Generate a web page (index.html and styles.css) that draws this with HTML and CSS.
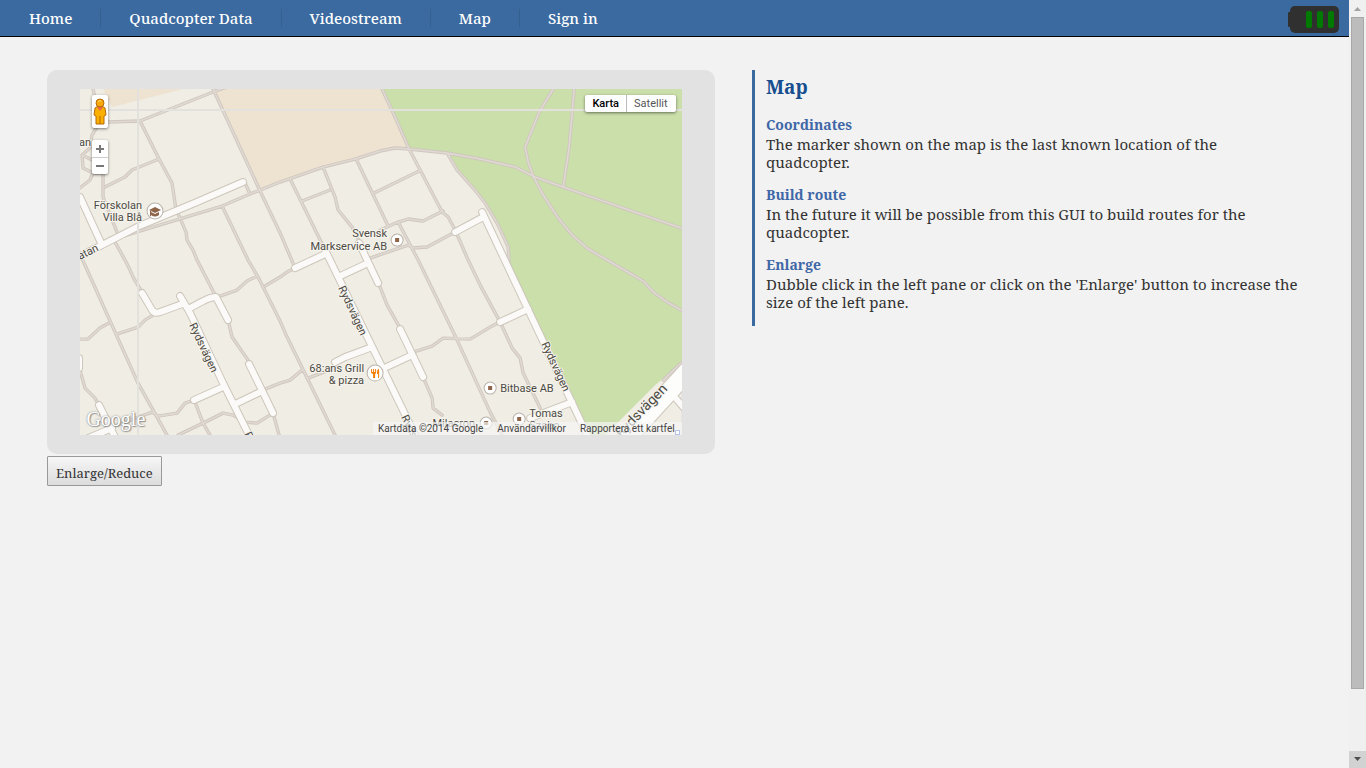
FILE: index.html
```html
<!DOCTYPE html>
<html lang="en">
<head>
<meta charset="utf-8">
<title>Map</title>
<link rel="stylesheet" href="styles.css">
</head>
<body>
<div class="page">
  <header class="topbar">
    <nav class="nav">
      <a class="nav-link" href="#home">Home</a>
      <a class="nav-link" href="#data">Quadcopter Data</a>
      <a class="nav-link" href="#video">Videostream</a>
      <a class="nav-link" href="#map">Map</a>
      <a class="nav-link" href="#signin">Sign in</a>
    </nav>
    <svg class="battery" width="52" height="28" viewBox="0 0 52 28" role="img" aria-label="Battery">
      <rect x="0" y="6" width="6" height="15" rx="1" fill="#303030"/>
      <rect x="2" y="0" width="49" height="27" rx="5" fill="#303030"/>
      <rect x="18" y="5" width="6" height="17" rx="2" fill="#007a00"/>
      <rect x="29" y="5" width="6" height="17" rx="2" fill="#007a00"/>
      <rect x="40" y="5" width="6" height="17" rx="2" fill="#007a00"/>
    </svg>
  </header>
  <main class="content">
    <section class="left">
      <div class="pane">
        <div class="map">
          <svg class="map-drawing" viewBox="80 89 601 346" role="img" aria-label="Street map">
            <rect x="80" y="89" width="601" height="346" fill="#f0ede4"/>
            <path fill="#eee2d0" d="M103 89H183L112 107ZM214 89H380L409 149L395 148L380 151L355 159L323 167L260 191Z"/>
            <path fill="#cadfaa" d="M380 89H682V363L655 385L605 435H587L509 264L508 247L497 223L485 203L473 188L457 170L447 153L409 149Z"/>
            <defs>
              <path id="paths" d="M213 89L260 191L281 235L295 268M108 122L140 121L213 92L227 87M140 121L159 159L172 183L176 210L180 218L186 232L187 240L193 250L197 260L215 295M105 187L125 177L132 170L159 159M93 89L97 108L98 125L92 135L90 148L82 155L83 168L93 173H103L103 197L117 232M93 173L90 180L80 188M82 155L92 160M120 237L222 206L250 194L280 182L323 167L355 159L380 151L395 148L409 149L447 153L480 159L515 167L535 177L563 187L620 207L681 228M245 183L250 194M222 206L248 260L258 277L280 321L287 337L335 435M115 242L125 260L130 270L133 277L142 292M80 254L138 383L167 435M80 339H88L100 328L109 323M117 334L138 327L145 320L153 315M220 296L237 290L247 281L257 276M265 286L280 277L287 272L295 268M228 320L232 337L250 363M265 389L280 383L290 380L302 370M308 378L337 367M80 370L85 388L95 398L99 405M117 425L152 412L158 416L177 413L185 403L194 400M195 402L203 423L210 435M178 435L203 423L223 413L233 415L245 422L257 423L273 413L279 435M290 179L325 250M302 201L330 190M323 167L335 197L338 210L352 227L360 243M356 159L388 226M374 193L419 171M382 89L394 115L409 149L442 212L448 217L455 230L468 260L480 285L500 322L512 348L520 358L523 373L540 408M380 230L398 222L408 219L423 221L443 211M398 222L418 260L457 340L490 412L502 435M370 258L408 245L413 248L427 247L455 232M380 287L387 305L400 328M413 352L432 346L443 338L470 339L490 327L500 322M423 377L432 398L433 408L442 415M553 89L539 112L525 147L528 162L533 176L543 195L558 218L572 235L588 249L607 260L643 281L653 292L667 302L681 310M574 89L569 147L563 187M447 153L457 170L473 188L485 203L497 223L508 247L509 264M682 362L663 380"/>
              <path id="streets" d="M243 182L197 202L137 227L102 245L80 256M80 197L102 245M142 293L152 310Q155 314 160 312L182 304M180 296L190 313L223 383L250 437M188 309L203 301Q211 297 216 297L228 320M194 400L223 387M235 404L262 391M249 364L273 413M99 405L115 437M88 438L112 428M79 358V368M295 268L325 254M325 250L380 363L416 437M338 277L368 263M359 243L378 283M335 362L345 357L372 347M384 368L412 355M400 329L423 377M455 232L483 217M482 212L588 437M500 322L528 309M530 418L572 402M672 394L684 408"/>
              <path id="avenue" d="M692 366L622 443"/>
            </defs>
            <g fill="none" stroke-linecap="round" stroke-linejoin="round">
              <use href="#paths" stroke="#cfc7be" stroke-width="3.4"/>
              <use href="#paths" stroke="#e0d9d3" stroke-width="1.6"/>
              <use href="#streets" stroke="#cdc6bb" stroke-width="8"/>
              <use href="#avenue" stroke="#cdc6bb" stroke-width="20"/>
              <use href="#streets" stroke="#fbfaf8" stroke-width="6"/>
              <use href="#avenue" stroke="#fdfdfc" stroke-width="18"/>
            </g>
            <path d="M80 110H682M138 89V435" stroke="#e2e1de" stroke-width="2" fill="none"/>
            <g class="road-names">
              <text x="80" y="260" transform="rotate(-27 80 260)">atan</text>
              <text x="79" y="146">an</text>
              <text transform="translate(189 325) rotate(65)">Rydsvägen</text>
              <text transform="translate(338 288) rotate(65)">Rydsvägen</text>
              <text transform="translate(541 344) rotate(65)">Rydsvägen</text>
              <text transform="translate(401 417) rotate(65)">Rydsvägen</text>
              <text transform="translate(244 434) rotate(65)">Rydsvägen</text>
              <text class="avenue-name" transform="translate(621 438) rotate(-46)">Rydsvägen</text>
            </g>
            <g class="places">
              <text x="142" y="209" text-anchor="end">Förskolan</text>
              <text x="142" y="221" text-anchor="end">Villa Blå</text>
              <text x="387" y="237" text-anchor="end">Svensk</text>
              <text x="387" y="250" text-anchor="end">Markservice AB</text>
              <text x="364" y="372" text-anchor="end">68:ans Grill</text>
              <text x="364" y="384" text-anchor="end">&amp; pizza</text>
              <text x="500" y="392">Bitbase AB</text>
              <text x="529" y="417">Tomas</text>
              <text x="529" y="429">Szabo</text>
              <text x="475" y="427" text-anchor="end">Milacron</text>
            </g>
            <g fill="#fff" stroke="#b9b3ab">
              <circle cx="155" cy="211" r="8"/><circle cx="375" cy="373" r="8"/>
              <circle cx="397" cy="240" r="6"/><circle cx="490" cy="388" r="6"/>
              <circle cx="519" cy="419" r="6"/><circle cx="486" cy="423" r="6"/>
            </g>
            <path fill="#8f6549" d="M395 238h4v4h-4zM488 386h4v4h-4zM517 417h4v4h-4zM484 421h4v4h-4zM149 210l6-3 6 3-6 3zM151 212l4 2 4-2v3q-4 3-8 0zM150 211h1v5h-1z"/>
            <path fill="#f57c00" d="M371 369h1v3h1v-3h1v3h1v-3h1v4l-1 1v4h-2v-4l-2-1zM379 369v9h-1v-4h-1v-2q0-3 2-3z"/>
          </svg>
          <button class="map-button pegman" type="button" aria-label="Street View">
            <svg width="14" height="28" viewBox="0 0 14 28">
              <path d="M2 10L5 8H9L12 10L13 17L11 18V26H3V18L1 17Z" fill="#f9b000" stroke="#b66b0b"/>
              <path d="M7 18V26" stroke="#b66b0b"/><path d="M4 9H10L7 13Z" fill="#ee654d"/>
              <circle cx="7" cy="5" r="4" fill="#f7a80c" stroke="#b66b0b"/><path d="M5 4Q6 2 8 3" stroke="#ffdf77" fill="none"/>
            </svg>
          </button>
          <div class="map-button zoom-control">
            <button type="button" aria-label="Zoom in"><svg width="8" height="8" viewBox="0 0 8 8"><path d="M0 4H8M4 0V8" stroke="#777" stroke-width="2"/></svg></button>
            <button type="button" aria-label="Zoom out"><svg width="8" height="8" viewBox="0 0 8 8"><path d="M0 4H8" stroke="#777" stroke-width="2"/></svg></button>
          </div>
          <div class="map-button type-control">
            <button class="selected" type="button">Karta</button>
            <button type="button">Satellit</button>
          </div>
          <a class="watermark" href="#google">Google</a>
          <div class="attribution">
            <span>Kartdata ©2014 Google</span>
            <a href="#terms">Användarvillkor</a>
            <a href="#report">Rapportera ett kartfel</a>
          </div>
          <span class="resize-mark"></span>
        </div>
      </div>
      <button class="enlarge" type="button">Enlarge/Reduce</button>
    </section>
    <aside class="info">
      <h1>Map</h1>
      <h2>Coordinates</h2>
      <p>The marker shown on the map is the last known location of the quadcopter.</p>
      <h2>Build route</h2>
      <p>In the future it will be possible from this GUI to build routes for the quadcopter.</p>
      <h2>Enlarge</h2>
      <p>Dubble click in the left pane or click on the 'Enlarge' button to increase the size of the left pane.</p>
    </aside>
  </main>
</div>
<div class="scrollbar" aria-hidden="true">
  <svg class="arrow" width="17" height="17" viewBox="0 0 17 17"><path d="M5 11L8.500 7L12 11Z" fill="#a3a3a3"/></svg>
  <div class="track"><div class="thumb"></div></div>
  <svg class="arrow arrow-down" width="17" height="17" viewBox="0 0 17 17"><path d="M5 6H12L8.500 10Z" fill="#505050"/></svg>
</div>
</body>
</html>
```
FILE: styles.css
```css
* { box-sizing: border-box; }
body {
  display: flex;
  min-height: 100vh;
  margin: 0;
  background: #f2f2f2;
  color: #333;
  font-family: "Droid Serif", "Noto Serif", "DejaVu Serif Condensed", "DejaVu Serif", serif;
}
button { font: inherit; cursor: pointer; }
.page { flex: 1; min-width: 0; }
.topbar {
  display: flex;
  align-items: center;
  justify-content: space-between;
  height: 37px;
  padding-right: 9px;
  border-bottom: 1px solid #000;
  background: #3b6aa0;
}
.nav { display: flex; }
.nav-link {
  padding: 0 28px;
  border-left: 1px solid #345f91;
  color: #fff;
  font-size: 15px;
  font-weight: 500;
  line-height: 18px;
  text-decoration: none;
}
.nav-link:first-child { border-left-color: transparent; }
.battery { display: block; margin-top: 4px; }
.content {
  display: grid;
  grid-template-columns: 668fr 548fr;
  align-items: start;
  column-gap: 37px;
  padding: 33px 49px 0 47px;
}
.left { min-width: 0; }
.pane { padding: 19px 5%; border-radius: 10px; background: #e2e2e2; }
.map { position: relative; overflow: hidden; font-family: Roboto, sans-serif; }
.map-drawing { display: block; width: 100%; height: auto; }
.map-drawing text {
  fill: #4c4a43;
  font-size: 11px;
  stroke: #f6f4ee;
  stroke-width: 2px;
  paint-order: stroke;
}
.map-drawing .avenue-name { font-size: 14px; }
.map-button {
  position: absolute;
  border: 0;
  border-radius: 2px;
  background: #fff;
  box-shadow: 0 1px 3px rgba(0, 0, 0, 0.5);
}
.pegman { top: 6px; left: 12px; width: 16px; height: 33px; padding: 2px 1px; }
.pegman svg { display: block; }
.zoom-control { top: 51px; left: 12px; width: 16px; }
.zoom-control button {
  display: flex;
  align-items: center;
  justify-content: center;
  width: 16px;
  height: 17px;
  padding: 0;
  border: 0;
  background: none;
}
.zoom-control button + button { border-top: 1px solid #ccc; }
.type-control { display: flex; top: 6px; right: 6px; }
.type-control button {
  height: 17px;
  padding: 0 7px;
  border: 0;
  background: none;
  color: #565656;
  font-size: 11px;
  line-height: 17px;
}
.type-control button + button { border-left: 1px solid #bbb; padding-right: 8px; }
.type-control .selected { color: #000; font-weight: 500; }
.watermark {
  position: absolute;
  bottom: 5px;
  left: 6px;
  color: #fff;
  font-family: "Liberation Serif", serif;
  font-size: 20px;
  line-height: 22px;
  text-decoration: none;
  text-shadow: 0 0 2px #777, 1px 1px 1px #999;
}
.attribution {
  position: absolute;
  right: 0;
  bottom: 0;
  display: flex;
  gap: 14px;
  padding: 0 7px 0 5px;
  background: rgba(245, 245, 245, 0.7);
  color: #444;
  font-size: 10px;
  line-height: 13px;
}
.attribution a { color: inherit; text-decoration: none; }
.resize-mark {
  position: absolute;
  right: 2px;
  bottom: 0;
  width: 5px;
  height: 5px;
  border: 1px solid #b5c4e8;
  background: #fff;
}
.enlarge {
  display: block;
  height: 30px;
  margin-top: 2px;
  padding: 3px 8px 0;
  border: 1px solid #999;
  border-radius: 1px;
  background: linear-gradient(#f6f6f6, #dcdcdc);
  color: #333;
  font-size: 13px;
}
.info {
  min-width: 0;
  padding: 6px 0 14px 11px;
  border-left: 3px solid #3b6aa0;
}
.info h1 {
  margin: 0 0 18px;
  color: #174e8f;
  font-size: 19px;
  line-height: 22px;
}
.info h2 {
  margin: 0;
  color: #3f67a7;
  font-size: 14px;
  line-height: 18px;
}
.info p { margin: 1px 0 15px; font-size: 15px; line-height: 18px; }
.info p:last-child { margin-bottom: 1px; }
.scrollbar {
  display: flex;
  flex-direction: column;
  width: 17px;
  background: #f0f0f0;
}
.arrow { display: block; }
.arrow-down { background: #d2d2d2; }
.track { flex: 1; padding: 0 2px; }
.thumb { height: 91.5%; border: 1px solid #a8a8a8; background: #bcbcbc; }
```
